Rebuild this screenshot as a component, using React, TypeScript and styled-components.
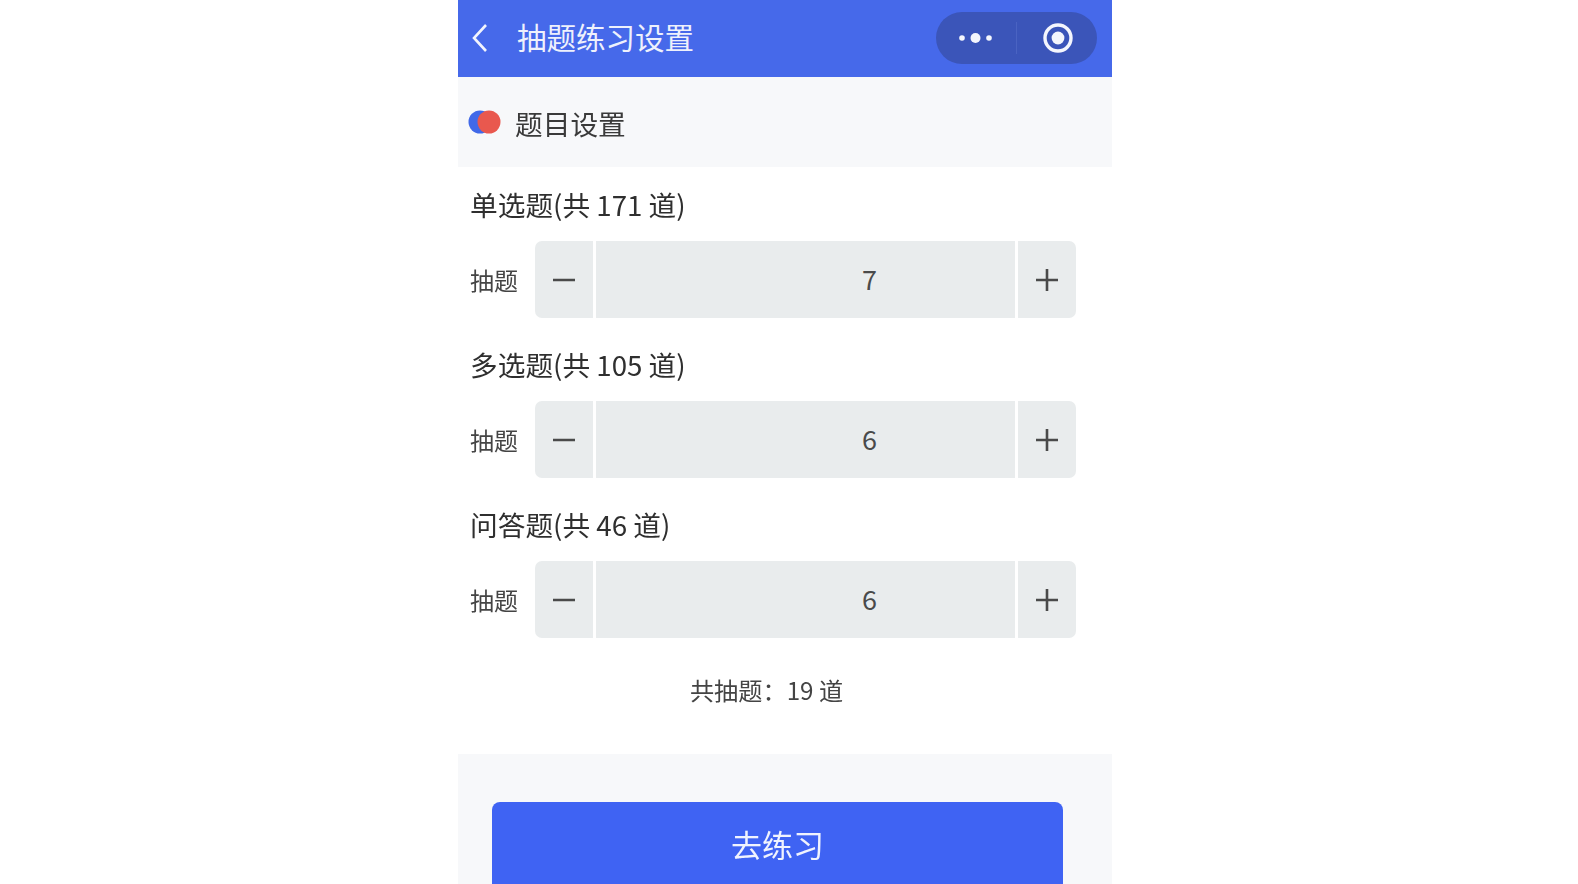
import styled, { createGlobalStyle } from "styled-components";

const GlobalStyle = createGlobalStyle`
  html, body {
    margin: 0;
    height: 100%;
    background: #fff;
    overflow: hidden;
  }
  body {
    font-family: "Noto Sans CJK SC", "Noto Sans", sans-serif;
    color: #333;
  }
`;

const Phone = styled.div`
  width: 654px;
  height: 884px;
  margin-left: 458px;
  overflow: hidden;
  display: flex;
  flex-direction: column;
  filter: blur(0.5px);
`;

const NavBar = styled.header`
  flex: none;
  height: 77px;
  background: #4669ea;
  display: flex;
  align-items: center;
  padding: 0 15px 1px 13px;
  box-sizing: border-box;
`;

const BackIcon = styled.svg`
  width: 18px;
  height: 30px;
  flex: none;
  margin-top: -1px;
`;

const NavTitle = styled.div`
  flex: 1;
  margin-left: 28px;
  margin-top: -4px;
  font-size: 29.5px;
  line-height: 40px;
  color: #eef1fc;
`;

const Capsule = styled.div`
  width: 161px;
  height: 52px;
  border-radius: 26px;
  background: #3b55b9;
  display: flex;
  align-items: center;
  margin-top: -1px;
`;

const CapsuleCell = styled.div`
  flex: 1;
  display: flex;
  align-items: center;
  justify-content: center;
`;

const CapsuleDivider = styled.div`
  flex: none;
  width: 1px;
  height: 32px;
  background: #4a63c2;
`;

const SectionBar = styled.div`
  flex: none;
  height: 90px;
  background: #f7f8fa;
  display: flex;
  align-items: center;
  padding-left: 10px;
  gap: 14px;
`;

const SectionDots = styled.svg`
  width: 33px;
  height: 24px;
  flex: none;
  margin-top: -1px;
`;

const SectionTitle = styled.div`
  font-size: 27.7px;
  line-height: 38px;
  margin-top: 2px;
  color: #3a3a3a;
`;

const Content = styled.main`
  flex: none;
  height: 587px;
  padding: 18px 36px 0 12px;
  box-sizing: border-box;
`;

const Group = styled.section`
  height: 160px;
`;

const GroupLabel = styled.div`
  font-size: 27.7px;
  line-height: 38px;
  height: 56px;
  color: #2f2f2f;
`;

const StepRow = styled.div`
  display: flex;
  align-items: center;
  height: 77px;
`;

const StepLabel = styled.div`
  width: 65px;
  flex: none;
  font-size: 24px;
  line-height: 34px;
  color: #444;
`;

const Stepper = styled.div`
  flex: 1;
  height: 100%;
  display: flex;
  gap: 3px;
  border-radius: 7px;
  overflow: hidden;
`;

const StepButton = styled.div`
  width: 58px;
  flex: none;
  background: #e9eced;
  display: flex;
  align-items: center;
  justify-content: center;
`;

const StepValue = styled.div`
  flex: 1;
  background: #e9eced;
  display: flex;
  align-items: center;
  justify-content: center;
  padding: 0 0 2px 128px;
  font-size: 27px;
  color: #4a4a4a;
`;

const Total = styled.div`
  margin-top: 7px;
  padding-right: 13px;
  text-align: center;
  font-size: 24.2px;
  line-height: 36px;
  color: #444;
`;

const Footer = styled.footer`
  flex: 1;
  background: #f7f8fa;
  padding: 48px 49px 0 34px;
`;

const GoButton = styled.button`
  display: block;
  width: 100%;
  height: 120px;
  border: 0;
  border-radius: 8px;
  background: #3f63f3;
  color: #f0f3fe;
  font-family: inherit;
  font-size: 31px;
  line-height: 44px;
  padding: 0 0 36px;
`;

const groups = [
  { label: "单选题(共 171 道)", value: 7 },
  { label: "多选题(共 105 道)", value: 6 },
  { label: "问答题(共 46 道)", value: 6 },
];

function MinusIcon() {
  return (
    <svg width="24" height="24" viewBox="0 0 24 24">
      <path d="M1 12H23" stroke="#4a4a4a" strokeWidth="2.6" />
    </svg>
  );
}

function PlusIcon() {
  return (
    <svg width="24" height="24" viewBox="0 0 24 24">
      <path d="M1 12H23M12 1V23" stroke="#4a4a4a" strokeWidth="2.6" />
    </svg>
  );
}

export default function App() {
  return (
    <>
      <GlobalStyle />
      <Phone>
        <NavBar>
          <BackIcon viewBox="0 0 18 30">
            <path d="M15 2L3 15L15 28" fill="none" stroke="#f2f4fd" strokeWidth="2.6" />
          </BackIcon>
          <NavTitle>抽题练习设置</NavTitle>
          <Capsule>
            <CapsuleCell>
              <svg width="36" height="12" viewBox="0 0 36 12">
                <circle cx="4" cy="6" r="2.8" fill="#f4f6fd" />
                <circle cx="17.5" cy="6" r="5" fill="#f4f6fd" />
                <circle cx="31" cy="6" r="2.8" fill="#f4f6fd" />
              </svg>
            </CapsuleCell>
            <CapsuleDivider />
            <CapsuleCell>
              <svg width="34" height="32" viewBox="0 0 32 32">
                <circle cx="17" cy="16" r="13" fill="none" stroke="#f4f6fd" strokeWidth="3.4" />
                <circle cx="17" cy="16" r="6.4" fill="#f4f6fd" />
              </svg>
            </CapsuleCell>
          </Capsule>
        </NavBar>
        <SectionBar>
          <SectionDots viewBox="0 0 33 24">
            <circle cx="12" cy="12" r="11.5" fill="#4169e8" />
            <circle cx="21" cy="12" r="11.5" fill="#e9584e" />
          </SectionDots>
          <SectionTitle>题目设置</SectionTitle>
        </SectionBar>
        <Content>
          {groups.map((group) => (
            <Group key={group.label}>
              <GroupLabel>{group.label}</GroupLabel>
              <StepRow>
                <StepLabel>抽题</StepLabel>
                <Stepper>
                  <StepButton>
                    <MinusIcon />
                  </StepButton>
                  <StepValue>{group.value}</StepValue>
                  <StepButton>
                    <PlusIcon />
                  </StepButton>
                </Stepper>
              </StepRow>
            </Group>
          ))}
          <Total>共抽题：19 道</Total>
        </Content>
        <Footer>
          <GoButton>去练习</GoButton>
        </Footer>
      </Phone>
    </>
  );
}
